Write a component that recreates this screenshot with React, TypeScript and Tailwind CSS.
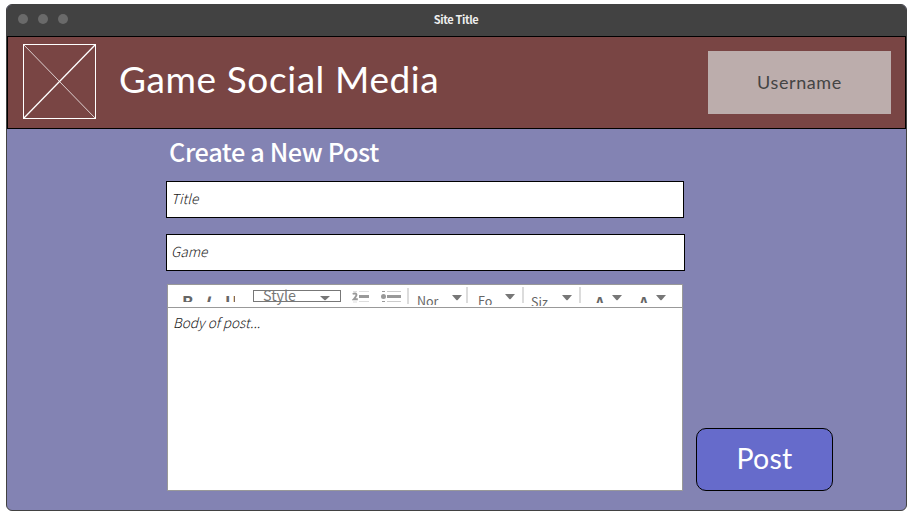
import React from "react";

const source = "font-['Noto_Sans_CJK_SC','Noto_Sans',sans-serif]";
const display = "font-['Lato','Open_Sans',sans-serif]";

function Caret({ className }: { className: string }) {
  return (
    <svg className={`w-[10px] shrink-0 fill-[#777] ${className}`} viewBox="0 0 10 6" preserveAspectRatio="none">
      <path d="M0 0H10L5.7 4.9Q5 5.5 4.3 4.9Z" />
    </svg>
  );
}

function Divider({ className }: { className: string }) {
  return <div className={`h-4 w-[2px] shrink-0 bg-[#dcdcdc] ${className}`} />;
}

/* Shows only the upper part of a toolbar label. */
function Cut({ className, children }: { className: string; children: React.ReactNode }) {
  return <div className={`shrink-0 overflow-hidden whitespace-nowrap ${className}`}>{children}</div>;
}

function Toolbar() {
  return (
    <div className={`flex h-[23px] items-start border-b border-[#999] text-[#666] ${source}`}>
      <Cut className="mt-[10px] ml-[14px] h-[7px] w-[14px] text-[17px] leading-[13px] font-bold">B</Cut>
      <Cut className="mt-[10px] ml-[8px] h-[7px] w-[12px] text-[17px] leading-[13px] font-bold italic">I</Cut>
      <Cut className="mt-[10px] ml-[9px] h-[7px] w-[10px] text-[17px] leading-[13px] font-bold">U</Cut>
      <div className="mt-[5px] ml-[18px] flex h-[12px] w-[88px] shrink-0 items-start border border-[#777]">
        <span className="-mt-[3px] ml-[9px] w-[38px] text-[14.3px] leading-[14px] text-[#777]">Style</span>
        <Caret className="mt-[5px] ml-[19px] h-[5px]" />
      </div>
      <svg className="mt-[5px] ml-[11px] h-[13px] w-[18px] shrink-0" viewBox="0 0 18 13">
        <path d="M7 1.5H17M7 11.5H17" stroke="#ddd" />
        <path d="M7 6.5H17" stroke="#999" strokeWidth="3" />
        <path d="M1 4.3Q1.4 3.4 3 3.4Q5 3.6 4.2 5.7Q3.4 7.5 1.7 9.3H5.8" fill="none" stroke="#999" strokeWidth="1.9" />
        <path d="M1 1.5H5M1 12H5" stroke="#ddd" />
      </svg>
      <svg className="mt-[5px] ml-[11px] h-[13px] w-[20px] shrink-0" viewBox="0 0 20 13">
        <path d="M6 1.5H20M6 11.5H20" stroke="#ccc" />
        <path d="M6 6.5H20" stroke="#999" strokeWidth="3" />
        <circle cx="2.5" cy="6.5" r="2.5" fill="#999" />
        <path d="M1 1.5H4M1 11.5H4" stroke="#999" />
      </svg>
      <Divider className="mt-[3px] ml-[6px]" />
      <Cut className="mt-[9px] ml-[8px] h-[11px] w-[24px] text-[12.5px] leading-[14px]">Nor</Cut>
      <Caret className="mt-[10px] ml-[11px] h-[6px]" />
      <Divider className="mt-[2px] ml-[4px]" />
      <Cut className="mt-[9px] ml-[10px] h-[11px] w-[18px] text-[12.5px] leading-[14px]">Fo</Cut>
      <Caret className="mt-[9px] ml-[9px] h-[6px]" />
      <Divider className="mt-[2px] ml-[7px]" />
      <Cut className="mt-[10px] ml-[7px] h-[11px] w-[20px] text-[12.5px] leading-[14px]">Siz</Cut>
      <Caret className="mt-[10px] ml-[11px] h-[6px]" />
      <Divider className="mt-[2px] ml-[7px]" />
      <Cut className="mt-[10px] ml-[14px] h-[8px] w-[12px] text-[15px] leading-[13px] font-bold">A</Cut>
      <Caret className="mt-[10px] ml-[5px] h-[6px]" />
      <Cut className="mt-[10px] ml-[17px] h-[8px] w-[12px] text-[15px] leading-[13px] font-bold">A</Cut>
      <Caret className="mt-[10px] ml-[5px] h-[6px]" />
    </div>
  );
}

export default function App() {
  return (
    <div className="h-[518px] w-[913px] overflow-hidden bg-white px-[6px] pt-[4px]">
      <div className="flex h-[507px] w-[901px] flex-col overflow-hidden rounded-[6px] border border-[#424242] bg-[#8383b3]">
        <div className="grid h-[31px] shrink-0 grid-cols-[1fr_auto_1fr] items-center bg-[#424242]">
          <div className="-mt-[3px] flex gap-[10px] pl-[10.5px]">
            <span className="size-[10px] rounded-full bg-[#6a6a6a]" />
            <span className="size-[10px] rounded-full bg-[#6a6a6a]" />
            <span className="size-[10px] rounded-full bg-[#6a6a6a]" />
          </div>
          <span className={`-mt-[3px] pr-px text-[11px] leading-[16px] font-bold tracking-[-0.35px] text-[#eee] ${source}`}>Site Title</span>
        </div>
        <header className="flex h-[93px] shrink-0 items-start border border-black bg-[#794544]">
          <svg className="mt-[7px] ml-[15px] h-[75px] w-[73px] shrink-0" viewBox="0 0 73 75" fill="none" stroke="#fff">
            <rect x="0.5" y="0.5" width="72" height="74" />
            <path d="M0.5 74.5L72.5 0.5" strokeWidth="1.3" />
            <path d="M0.5 0.5L72.5 74.5" strokeOpacity="0.75" />
          </svg>
          <h1 className={`mt-[19px] ml-[23px] text-[37px] leading-[46px] tracking-[0.6px] whitespace-nowrap text-white ${display}`}>Game Social Media</h1>
          <div className={`mt-[14px] mr-[14px] ml-auto flex h-[63px] w-[183px] items-center justify-center bg-[#bcadac] text-[18px] tracking-[0.6px] text-[#444] ${display}`}>
            <span>Username</span>
          </div>
        </header>
        <main className="flex items-end pl-[159px]">
          <div className="flex w-[519px] flex-col">
            <h2 className={`mt-[4px] ml-[3px] h-[48px] text-[25.3px] leading-[37px] font-medium tracking-[-0.4px] whitespace-nowrap text-white ${source}`}>Create a New Post</h2>
            <div className={`flex h-[37px] w-[518px] items-center border border-black bg-white pb-[3px] pl-[4px] text-[13.7px] font-light text-[#222] italic ${source}`}>
              <span>Title</span>
            </div>
            <div className={`mt-[16px] flex h-[37px] items-center border border-black bg-white pb-[3px] pl-[4px] text-[13.7px] font-light text-[#222] italic ${source}`}>
              <span>Game</span>
            </div>
            <div className="mt-[13px] ml-[1px] h-[207px] w-[516px] border border-[#999] bg-white">
              <Toolbar />
              <p className={`mt-[5px] ml-[5px] text-[13.6px] leading-[19px] font-light text-[#222] italic ${source}`}>Body of post...</p>
            </div>
          </div>
          <button className={`ml-[11px] h-[63px] w-[137px] rounded-[10px] border border-black bg-[#666bcb] pb-[2px] text-[28.5px] tracking-[0.2px] text-white ${display}`}>
            <span>Post</span>
          </button>
        </main>
      </div>
    </div>
  );
}
